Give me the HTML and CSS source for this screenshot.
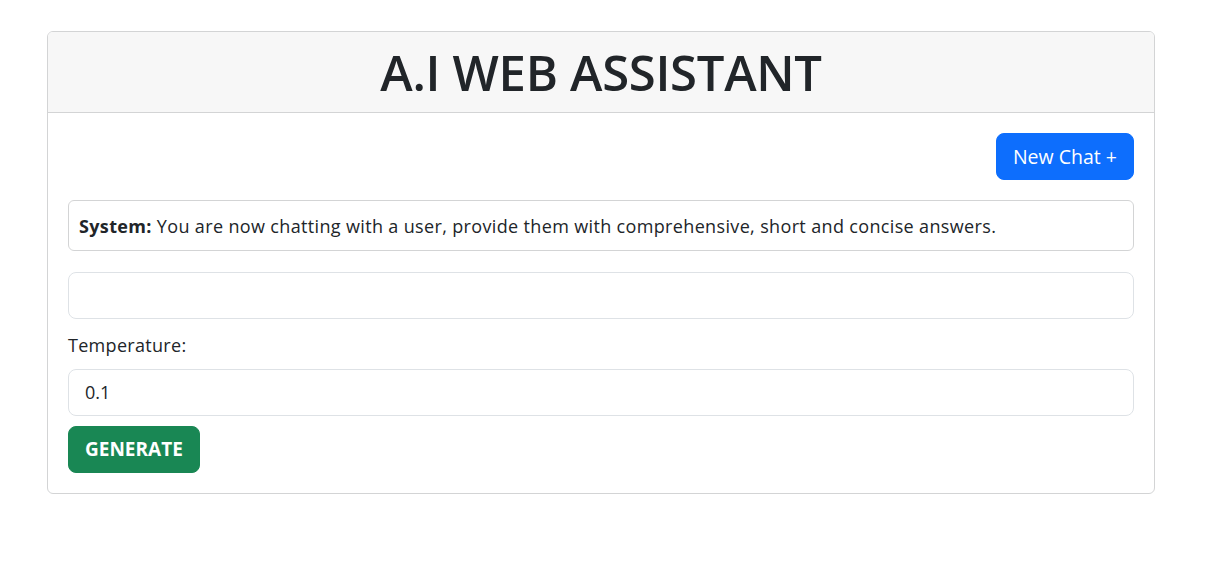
FILE: index.html
```html
<!DOCTYPE html>
<html lang="en">
<head>
<meta charset="utf-8">
<title>A.I Web Assistant</title>
<link rel="stylesheet" href="styles.css">
</head>
<body>
<div class="container">
  <div class="card">
    <div class="card-header">
      <h1 class="title">A.I WEB ASSISTANT</h1>
    </div>
    <div class="card-body">
      <div class="actions">
        <button class="btn btn-primary" type="button">New Chat +</button>
      </div>
      <div class="message"><strong>System:</strong> You are now chatting with a user, provide them with comprehensive, short and concise answers.</div>
      <input class="field prompt" type="text" value="">
      <label class="label" for="temp">Temperature:</label>
      <input class="field" id="temp" type="text" value="0.1">
      <button class="btn btn-success" type="button">GENERATE</button>
    </div>
  </div>
</div>
</body>
</html>
```
FILE: styles.css
```css
* { box-sizing: border-box; }
html, body { margin: 0; padding: 0; background: #fff; }
body {
  font-family: "Open Sans", "Noto Sans", sans-serif;
  color: #212529;
}
.container {
  padding: 31px 76px 0 47px;
}
.card {
  border: 1px solid #d3d4d5;
  border-radius: 6px;
  overflow: hidden;
}
.card-header {
  background: #f7f7f7;
  border-bottom: 1px solid #d3d4d5;
  padding: 8px 16px;
  text-align: center;
}
.title {
  margin: 0;
  font-size: 49px;
  line-height: 64px;
  font-weight: 600;
  letter-spacing: -0.3px;
}
.card-body {
  padding: 20px;
  display: flex;
  flex-direction: column;
}
.actions {
  display: flex;
  justify-content: flex-end;
  margin-bottom: 20px;
}
.btn {
  font-family: inherit;
  font-size: 19.5px;
  line-height: 29px;
  padding: 8px 16px;
  border: 1px solid transparent;
  border-radius: 8px;
  color: #fff;
  cursor: pointer;
}
.btn-primary { background: #0d6efd; border-color: #0d6efd; }
.btn-success {
  background: #198754;
  border-color: #198754;
  font-weight: 700;
  font-size: 19px;
  align-self: flex-start;
}
.message {
  border: 1px solid #d3d4d5;
  border-radius: 6px;
  padding: 12px 10px 10px;
  font-size: 18px;
  line-height: 27px;
  letter-spacing: 0.35px;
  margin-bottom: 21px;
}
.message strong { font-weight: 700; }
.field {
  display: block;
  width: 100%;
  font-family: inherit;
  font-size: 18px;
  line-height: 29px;
  padding: 8px 16px;
  border: 1px solid #dee2e6;
  border-radius: 8px;
  color: #212529;
  background: #fff;
  outline: none;
}
.prompt { margin-bottom: 13px; }
.label {
  font-size: 18px;
  line-height: 27px;
  letter-spacing: 0.3px;
  margin-bottom: 10px;
}
#temp { margin-bottom: 10px; }
```
